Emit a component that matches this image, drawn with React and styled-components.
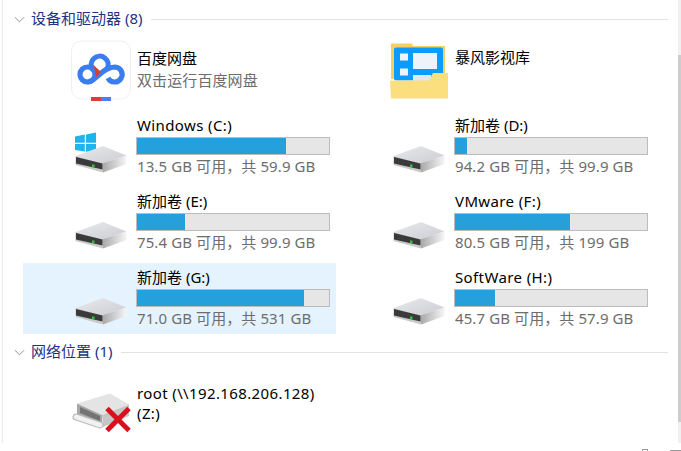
import styled, { createGlobalStyle } from "styled-components";

const GlobalStyle = createGlobalStyle`
  html, body {
    margin: 0;
    padding: 0;
    background: #fff;
  }
  body {
    width: 681px;
    height: 451px;
    overflow: hidden;
    font-family: "Noto Sans", "Noto Sans CJK SC", sans-serif;
  }
`;

const drives = [
  { name: "Windows (C:)", free: "13.5 GB 可用，共 59.9 GB", used: 77.5, system: true, latin: true },
  { name: "新加卷 (D:)", free: "94.2 GB 可用，共 99.9 GB", used: 6 },
  { name: "新加卷 (E:)", free: "75.4 GB 可用，共 99.9 GB", used: 25 },
  { name: "VMware (F:)", free: "80.5 GB 可用，共 199 GB", used: 60, latin: true },
  { name: "新加卷 (G:)", free: "71.0 GB 可用，共 531 GB", used: 87, selected: true },
  { name: "SoftWare (H:)", free: "45.7 GB 可用，共 57.9 GB", used: 21, latin: true },
];

const BaiduIcon = () => (
  <svg width="64" height="64" viewBox="0 0 64 64">
    <rect x="2.5" y="2" width="59" height="58" rx="10" fill="#fff" stroke="#f0f0f0" />
    <g fill="none" stroke="#3a7df0" strokeWidth="5.2">
      <circle cx="18.5" cy="35.5" r="7.5" />
      <path d="M24 31 A8.5 8.5 0 1 1 38 30" />
      <path d="M18.5 43 C27 43 33 28 46 28 A7.5 7.5 0 1 1 39 39" />
    </g>
    <path d="M23.5 25 L32 33 L27 38.5 C27 33 25.5 29 23.5 25 Z" fill="#d6402c" />
    <rect x="22" y="58" width="10" height="4" fill="#e6373a" />
    <rect x="32" y="58" width="10" height="4" fill="#4680f2" />
  </svg>
);

const FolderIcon = () => (
  <svg width="64" height="64" viewBox="0 0 64 64">
    <path d="M4 4.5 H25 L26 7 H58 V40 H4 Z" fill="#f5d061" />
    <rect x="7" y="8.5" width="49" height="33" rx="2" fill="#0a9dff" />
    <rect x="26" y="14" width="24" height="16" fill="#eef3f9" />
    <rect x="13" y="14.5" width="8" height="7" fill="#eef3f9" />
    <rect x="13" y="29.5" width="8" height="7" fill="#eef3f9" />
    <rect x="26" y="36" width="18" height="6" fill="#dfe8ef" />
    <path d="M3 41.5 H42 L46 34 H61 V59.5 H4 Z" fill="#fbdf7e" />
  </svg>
);

const DriveIcon = ({ system }) => (
  <svg width="64" height="64" viewBox="0 0 64 64">
    <defs>
      <linearGradient id="driveTop" x1="0" y1="0" x2="1" y2="1">
        <stop offset="0" stopColor="#e9eaed" />
        <stop offset="1" stopColor="#cbcdd2" />
      </linearGradient>
      <linearGradient id="driveSide" x1="0" y1="0" x2="1" y2="0">
        <stop offset="0" stopColor="#a9a9a9" />
        <stop offset="1" stopColor="#f6f6f6" />
      </linearGradient>
    </defs>
    {system && (
      <g fill="#1fb4ec">
        <path d="M6 21.5 L15.8 19.6 V27.8 H6 Z" />
        <path d="M17 19.4 L27 17.5 V27.8 H17 Z" />
        <path d="M6 29 H15.8 V36.5 L6 35 Z" />
        <path d="M17 29 H27 V38 L17 36.6 Z" />
      </g>
    )}
    <path d="M6.5 41 L34 31 L57.5 40.5 L34 48 Z" fill="url(#driveTop)" />
    <path d="M34 48 L57.5 40.5 V49 L34 57.5 Z" fill="url(#driveSide)" />
    <path d="M6.5 41 L34 48 V57.5 L6.5 50 Z" fill="#c9c9c9" />
    <path d="M7 42 L33.5 48.5 V54.5 L7 48.5 Z" fill="#3a3a3a" />
    <rect x="23" y="49.5" width="2.5" height="2.5" fill="#28c83c" />
  </svg>
);

const NetworkIcon = () => (
  <svg width="64" height="64" viewBox="0 0 64 64">
    <path d="M8 31.5 L41 21.5 L60 32.5 L33 43 Z" fill="#e4e4e4" />
    <path d="M33 43 L60 32.5 V44 L34 55 Z" fill="#c6c6c6" />
    <path d="M8 31.5 L33 43 V52 L8 42 Z" fill="#a6a6a6" />
    <path d="M11 35 L31 44 V49 L11 41 Z" fill="#737373" />
    <g fill="none" strokeLinecap="round">
      <path d="M7 45 L31 53" stroke="#bcbcbc" strokeWidth="7" />
      <path d="M7 45 L31 53" stroke="#f1f1f1" strokeWidth="4.5" />
    </g>
    <g stroke="#d8111f" strokeWidth="5">
      <path d="M38 36.5 L60 58.5" />
      <path d="M60 36.5 L38 58.5" />
    </g>
  </svg>
);

const App = () => {
  return (
    <>
      <GlobalStyle />
      <Window>
        <Section>
          <GroupHeader>
            <Chevron viewBox="0 0 12 12">
              <path d="M1 3.5 L6 8.5 L11 3.5" />
            </Chevron>
            <GroupTitle>设备和驱动器 (8)</GroupTitle>
            <GroupRule />
          </GroupHeader>
          <TileGrid>
            <Tile>
              <IconSlot>
                <BaiduIcon />
              </IconSlot>
              <TileText $top={13}>
                <Name>百度网盘</Name>
                <Detail>双击运行百度网盘</Detail>
              </TileText>
            </Tile>
            <Tile>
              <IconSlot>
                <FolderIcon />
              </IconSlot>
              <TileText $top={12}>
                <Name>暴风影视库</Name>
              </TileText>
            </Tile>
            {drives.map((drive) => (
              <Tile key={drive.name} $selected={drive.selected}>
                <IconSlot>
                  <DriveIcon system={drive.system} />
                </IconSlot>
                <TileText $top={4}>
                  <Name $latin={drive.latin}>{drive.name}</Name>
                  <UsageBar>
                    <UsageFill style={{ width: `${drive.used}%` }} />
                  </UsageBar>
                  <Detail>{drive.free}</Detail>
                </TileText>
              </Tile>
            ))}
          </TileGrid>
        </Section>
        <Section $later>
          <GroupHeader>
            <Chevron viewBox="0 0 12 12">
              <path d="M1 3.5 L6 8.5 L11 3.5" />
            </Chevron>
            <GroupTitle>网络位置 (1)</GroupTitle>
            <GroupRule />
          </GroupHeader>
          <TileGrid>
            <Tile>
              <IconSlot>
                <NetworkIcon />
              </IconSlot>
              <TileText $top={15}>
                <Name $latin>
                  root (\\192.168.206.128)
                  <br />
                  (Z:)
                </Name>
              </TileText>
            </Tile>
          </TileGrid>
        </Section>
        <ScrollTrack>
          <ScrollCap />
          <ScrollThumb />
          <ScrollEnd />
        </ScrollTrack>
      </Window>
      <CornerMark />
      <CornerLine />
    </>
  );
};

export default App;

const Window = styled.div`
  position: relative;
  box-sizing: border-box;
  width: 681px;
  height: 443px;
  padding: 9px 13px 0 14px;
  display: flex;
  flex-direction: column;
  &::before {
    content: "";
    position: absolute;
    left: 2px;
    top: 0;
    bottom: 0;
    width: 1px;
    background: #eaeaea;
  }
`;

const Section = styled.section`
  display: flex;
  flex-direction: column;
  margin-top: ${(props) => (props.$later ? "8px" : "0")};
`;

const GroupHeader = styled.div`
  display: flex;
  align-items: center;
  gap: 6px;
  height: 20px;
  margin-bottom: 6px;
`;

const Chevron = styled.svg`
  width: 11px;
  height: 11px;
  flex: none;
  path {
    fill: none;
    stroke: #8a8a8a;
    stroke-width: 1;
  }
`;

const GroupTitle = styled.span`
  font-size: 15px;
  line-height: 20px;
  padding-bottom: 2px;
  color: #1e3287;
  white-space: nowrap;
`;

const GroupRule = styled.div`
  flex: 1;
  height: 1px;
  margin-left: 3px;
  background: #e2e2e2;
`;

const TileGrid = styled.div`
  display: grid;
  grid-template-columns: 313px 313px;
  gap: 5px;
  margin-left: 9px;
`;

const Tile = styled.div`
  display: flex;
  height: 71px;
  background: ${(props) => (props.$selected ? "#e5f3ff" : "transparent")};
`;

const IconSlot = styled.div`
  width: 114px;
  flex: none;
  display: flex;
  align-items: center;
  padding-left: 46px;
  box-sizing: border-box;
`;

const TileText = styled.div`
  display: flex;
  flex-direction: column;
  padding-top: ${(props) => props.$top}px;
`;

const Name = styled.div`
  font-size: 15px;
  line-height: 20px;
  margin-bottom: 2px;
  letter-spacing: ${(props) => (props.$latin ? "0.38px" : "0")};
  color: #000;
  white-space: nowrap;
`;

const Detail = styled.div`
  font-size: 15px;
  line-height: 20px;
  letter-spacing: 0.1px;
  color: #6d6d6d;
  white-space: nowrap;
`;

const UsageBar = styled.div`
  box-sizing: border-box;
  width: 194px;
  height: 18px;
  margin: 0 0 1px -1px;
  border: 1px solid #bcbcbc;
  background: #e6e6e6;
`;

const UsageFill = styled.div`
  height: 100%;
  background: #26a0da;
`;

const ScrollTrack = styled.div`
  position: absolute;
  right: 0;
  top: 0;
  bottom: 0;
  width: 3px;
  display: flex;
  flex-direction: column;
`;

const ScrollCap = styled.div`
  height: 55px;
  background: #f0f0f0;
`;

const ScrollThumb = styled.div`
  flex: 1;
  background: #cdcdcd;
`;

const ScrollEnd = styled.div`
  height: 21px;
  background: #f0f0f0;
`;

const CornerMark = styled.div`
  position: absolute;
  left: 642px;
  top: 449px;
  width: 6px;
  height: 2px;
  box-sizing: border-box;
  border: 1px solid #9a9a9a;
  border-bottom: none;
`;

const CornerLine = styled.div`
  position: absolute;
  left: 670px;
  top: 450px;
  width: 11px;
  height: 1px;
  background: #9a9a9a;
`;
